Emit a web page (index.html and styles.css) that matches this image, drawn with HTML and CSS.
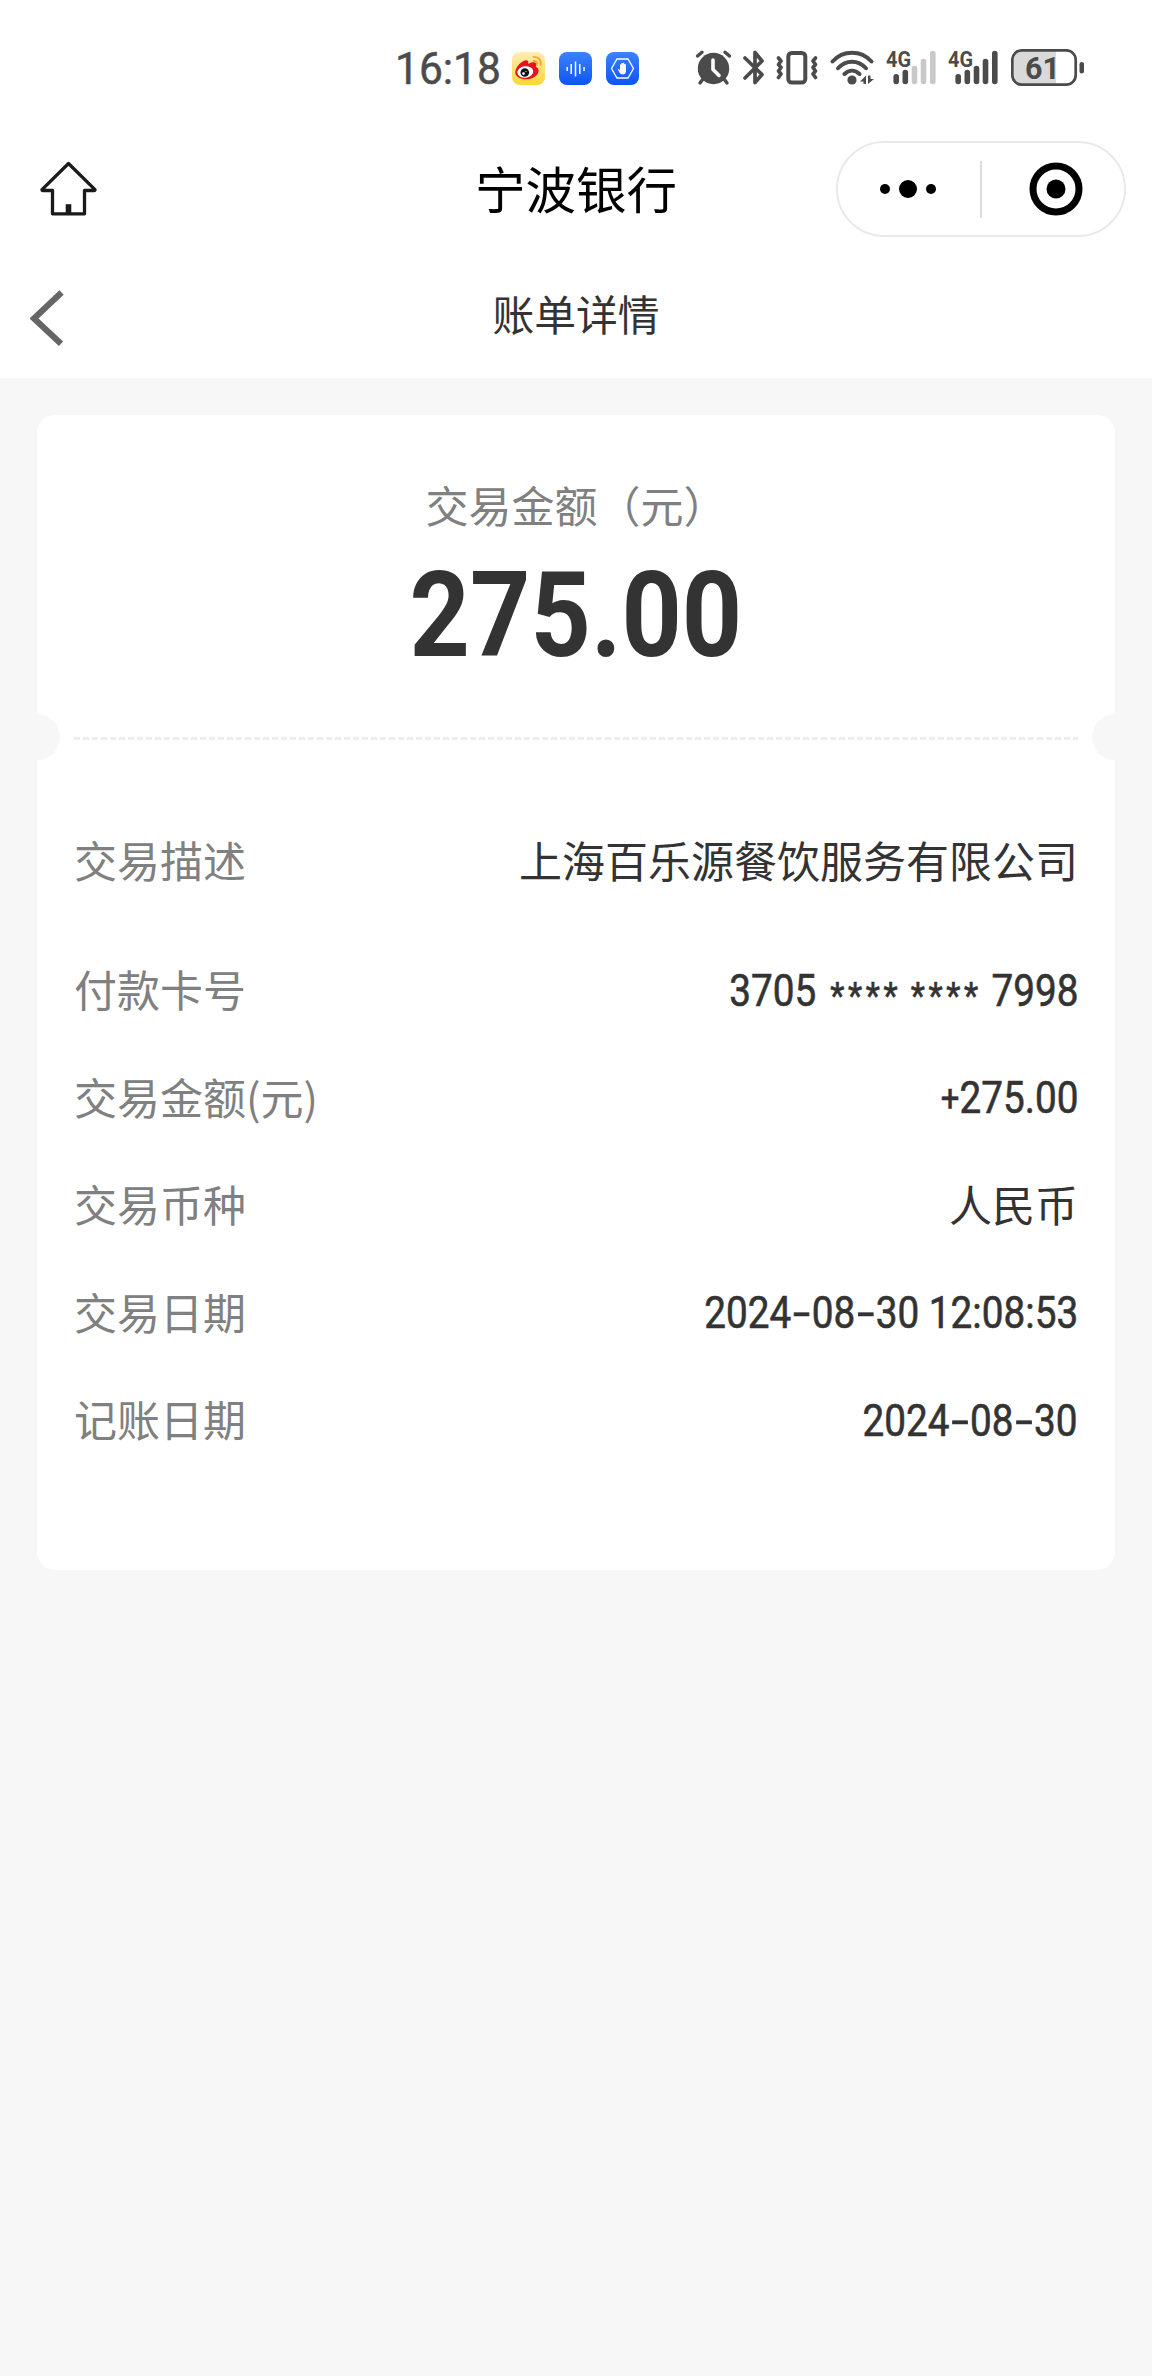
FILE: index.html
```html
<!DOCTYPE html>
<html lang="zh-CN">
<head>
<meta charset="UTF-8">
<title>账单详情</title>
<link rel="stylesheet" href="styles.css">
</head>
<body>
<header class="top">
  <div class="status">
    <span class="clock"><span class="clock-text">16:18</span></span>
    <svg class="app" viewBox="0 0 33 33">
      <defs>
        <linearGradient id="sun" x1="0" y1="0" x2="0" y2="1"><stop offset="0" stop-color="#ffecb9"/><stop offset="1" stop-color="#ffd636"/></linearGradient>
        <linearGradient id="sky" x1="0" y1="0" x2="0" y2="1"><stop offset="0" stop-color="#3d82ff"/><stop offset="1" stop-color="#0d55f5"/></linearGradient>
      </defs>
      <rect width="33" height="33" rx="8" fill="url(#sun)"/>
      <path d="M3.3 20.5C3.3 15 10 8.300 14.200 8.300C16.200 8.300 16.700 10 16.200 12C19 10.300 23 9.500 24 11.500C24.500 12.700 23.900 14 23.900 15C27 16 27.300 19 25.500 22C23 26 17.500 27.500 13 27.200C7 26.800 3.300 24 3.300 20.500Z" fill="#e3141e"/>
      <ellipse cx="13.300" cy="20" rx="8" ry="5.800" fill="#fff" transform="rotate(-8 13.300 20)"/>
      <circle cx="12.800" cy="20.500" r="4.300" fill="#111"/>
      <circle cx="11.500" cy="21.600" r="1.300" fill="#fff"/>
      <circle cx="14" cy="19.600" r=".6" fill="#fff"/>
      <path d="M21.500 4.900C26.500 4.300 29.700 8.500 28.600 13M21.800 9C24.200 8.700 25.600 10.500 24.900 12.700" fill="none" stroke="#f9a62b" stroke-width="1.900" stroke-linecap="round"/>
    </svg>
    <svg class="app" viewBox="0 0 33 33">
      <rect width="33" height="33" rx="8" fill="url(#sky)"/>
      <path d="M8.200 15v4M12.200 12v10M16.500 9.500v15M20.800 12v10M25 15v4" stroke="#fff" stroke-width="1.500"/>
    </svg>
    <svg class="app" viewBox="0 0 33 33">
      <rect width="33" height="33" rx="8" fill="url(#sky)"/>
      <path d="M11 7H22L27.500 16.500L22 26H11L5.500 16.500Z" fill="none" stroke="#fff" stroke-width="1.300"/>
      <path d="M11.500 16.500L14 18V12.500Q14.700 11.800 15.300 12.500V11.300Q16 10.500 16.800 11.300V11Q17.600 10.300 18.300 11.300V12.300Q19.300 11.700 19.900 12.600V20Q19.500 22.500 17 22.500Q14.500 22.500 13.400 20.500Z" fill="#fff"/>
    </svg>
    <svg class="glyph alarm" viewBox="0 0 38 44">
      <circle cx="18.500" cy="22.500" r="15.700" fill="#4b4b4b"/>
      <path d="M2.500 10L7 6.200M34.500 10L30 6.200M8 33L5 37M29 33L32 37" stroke="#4b4b4b" stroke-width="3.400" stroke-linecap="round"/>
      <path d="M18 14v9.500l6 6" fill="none" stroke="#fff" stroke-width="3.600" stroke-linecap="round" stroke-linejoin="round"/>
    </svg>
    <svg class="glyph bluetooth" viewBox="0 0 24 44">
      <path d="M3 12L20 28.500L13 36.500V26M3 32L20 15L13 6.500V20" fill="none" stroke="#4b4b4b" stroke-width="3.700" stroke-linecap="round" stroke-linejoin="round"/>
    </svg>
    <svg class="glyph vibrate" viewBox="0 0 42 44">
      <rect x="12.300" y="7" width="17" height="29.500" rx="3.500" fill="none" stroke="#4b4b4b" stroke-width="4"/>
      <path d="M2.500 12L5 15L2.500 18.500L5 21.500L2.500 25L5 28L2.500 31.500M39.500 12L37 15L39.500 18.500L37 21.500L39.500 25L37 28L39.500 31.500" fill="none" stroke="#4b4b4b" stroke-width="3.600" stroke-linecap="round" stroke-linejoin="round"/>
    </svg>
    <svg class="glyph wifi" viewBox="0 0 44 44">
      <path d="M2.500 15.500C13 3.800 31 3.800 41.500 15.500M8 22.300C16 13.500 28 13.500 36 22.300M14.500 28C19 23.500 25 23.500 29.500 28" fill="none" stroke="#4b4b4b" stroke-width="3.900" stroke-linecap="round"/>
      <circle cx="22" cy="34" r="4.600" fill="#4b4b4b"/>
      <path d="M36 29.500V38H33.500V35.500H30ZM38 38V29.500H40.500V33H44Z" fill="#4b4b4b"/>
    </svg>
    <svg class="glyph signal" viewBox="0 0 51 44">
      <text class="net" x="0" y="21" textLength="25" lengthAdjust="spacingAndGlyphs">4G</text>
      <path d="M10.200 30.800v4.700M19.300 26.500v9" stroke="#4b4b4b" stroke-width="5.600" stroke-linecap="round"/>
      <path d="M28.500 22.500v13M37.500 15.500v20M46.800 7.500v28" stroke="#c8c8c8" stroke-width="5.600" stroke-linecap="round"/>
    </svg>
    <svg class="glyph signal second" viewBox="0 0 51 44">
      <text class="net" x="0" y="21" textLength="25" lengthAdjust="spacingAndGlyphs">4G</text>
      <path d="M10.200 30.800v4.700M19.300 26.500v9M28.500 22.500v13M37.500 15.500v20M46.800 7.500v28" stroke="#4b4b4b" stroke-width="5.600" stroke-linecap="round"/>
    </svg>
    <svg class="glyph battery" viewBox="0 0 74 44">
      <path d="M45 4.500H12Q2 4.500 2 14V30Q2 39 12 39H45Z" fill="#d9d9d9"/>
      <rect x="1.300" y="4.300" width="63.400" height="34.400" rx="9.500" fill="none" stroke="#4b4b4b" stroke-width="2.700"/>
      <rect x="68.500" y="16" width="4.500" height="11.500" rx="2.200" fill="#4b4b4b"/>
      <text class="level" x="14" y="33" textLength="35" lengthAdjust="spacingAndGlyphs">61</text>
    </svg>
  </div>
  <div class="nav">
    <svg class="home" viewBox="0 0 60 60">
      <path d="M31.500 5.500L58 31.700Q58 32.500 57 32.500H47.500V55.800H15.500V32.500H6Q5 32.500 5 31.700Z" fill="none" stroke="#1a1a1c" stroke-width="3.300" stroke-linejoin="round"/>
      <path d="M28.700 46.200h5.600V56h-5.600z" fill="#1a1a1c"/>
    </svg>
    <h1 class="bank">宁波银行</h1>
    <div class="capsule">
      <svg class="more" viewBox="0 0 58 20"><circle cx="6" cy="10" r="5"/><circle cx="29" cy="10" r="9"/><circle cx="52" cy="10" r="5"/></svg>
      <span class="divider"></span>
      <svg class="target" viewBox="0 0 54 54"><circle cx="27" cy="27" r="23" fill="none" stroke="#000" stroke-width="7"/><circle cx="27" cy="27" r="9.500"/></svg>
    </div>
  </div>
  <div class="subnav">
    <svg class="back" viewBox="0 0 40 60"><path d="M31.500 4.500L4 30.500L31 55.800" fill="none" stroke="#666" stroke-width="6.200"/></svg>
    <h2 class="page-title">账单详情</h2>
  </div>
</header>
<main class="card">
  <section class="summary">
    <div class="caption">交易金额（元）</div>
    <div class="amount">275.00</div>
  </section>
  <div class="tear">
    <svg class="dashes" viewBox="0 0 1004 3"><path d="M0 1.500H1004" stroke="#ededed" stroke-width="3" stroke-dasharray="6 3"/></svg>
  </div>
  <dl class="rows">
    <div class="row first"><dt>交易描述</dt><dd>上海百乐源餐饮服务有限公司</dd></div>
    <div class="row"><dt>付款卡号</dt><dd class="num"><span class="lead">3705</span> <span class="stars">****</span> <span class="stars">****</span> 7998</dd></div>
    <div class="row"><dt>交易金额(元)</dt><dd class="num"><span class="plus">+</span>275.00</dd></div>
    <div class="row"><dt>交易币种</dt><dd>人民币</dd></div>
    <div class="row"><dt>交易日期</dt><dd class="num">2024<span class="dash">-</span>08<span class="dash">-</span>30 12:08:53</dd></div>
    <div class="row"><dt>记账日期</dt><dd class="num">2024<span class="dash">-</span>08<span class="dash">-</span>30</dd></div>
  </dl>
</main>
</body>
</html>
```
FILE: styles.css
```css
* { box-sizing: border-box; }
body {
  margin: 0;
  min-height: 2376px;
  background: #f7f7f7;
  color: #333;
  font-family: "Noto Sans CJK SC", sans-serif;
}
svg { display: block; flex: none; }
h1, h2, dl, dt, dd { margin: 0; font-weight: 400; }

.top { height: 378px; background: #fff; }

.status { display: flex; align-items: center; height: 136px; padding-left: 395px; }
.clock { width: 117px; padding-top: 1px; color: #4b4b4b; font: 400 45px/44px Roboto, sans-serif; -webkit-text-stroke: .5px #4b4b4b; }
.clock-text { display: inline-block; transform: scaleX(.945); transform-origin: left; }
.app { width: 33px; height: 33px; margin-right: 14px; }
.glyph { height: 44px; }
.alarm { width: 38px; margin-left: 42px; }
.bluetooth { width: 24px; margin-left: 9px; }
.vibrate { width: 42px; margin-left: 10px; }
.wifi { width: 44px; margin-left: 12px; }
.signal { width: 51px; margin-left: 12px; }
.second { margin-left: 11px; }
.battery { width: 74px; margin-left: 12px; }
.net { font: 700 22.500px Roboto, sans-serif; fill: #4b4b4b; }
.level { font: 700 32px Roboto, sans-serif; fill: #4b4b4b; }

.nav {
  display: grid;
  grid-template-columns: 1fr auto 1fr;
  align-items: center;
  height: 106px;
  padding: 0 26px 0 37px;
}
.home { width: 60px; height: 60px; margin-bottom: 2px; }
.bank { margin: 0 11px 4px 0; color: #000; font-size: 50.500px; line-height: 74px; }
.capsule {
  display: flex;
  align-items: center;
  justify-self: end;
  width: 290px;
  height: 96px;
  padding-left: 41px;
  border: 2px solid #e9e9e9;
  border-radius: 48px;
}
.more { width: 58px; height: 20px; }
.divider { width: 2px; height: 57px; margin: 0 46.500px 0 43px; background: #ddd; }
.target { width: 54px; height: 54px; }

.subnav {
  display: grid;
  grid-template-columns: 1fr auto 1fr;
  align-items: center;
  height: 136px;
  padding: 0 30px;
}
.back { width: 40px; height: 60px; margin-top: 15px; }
.page-title { font-size: 41.800px; line-height: 60px; margin-top: 6px; }

.card {
  width: 1078px;
  height: 1155px;
  margin: 37px auto 0;
  border-radius: 18px;
  background:
    radial-gradient(circle at 0 322px, #f7f7f7 22.500px, transparent 23.500px),
    radial-gradient(circle at 1078px 322px, #f7f7f7 22.500px, transparent 23.500px),
    #fff;
}
.summary {
  display: flex;
  flex-direction: column;
  align-items: center;
  height: 322px;
  padding-top: 58px;
}
.caption { color: #808080; font-size: 43px; line-height: 62px; }
.amount {
  margin-top: 16px;
  font: 700 119px/130px Roboto, sans-serif;
  transform: scaleX(.885);
}
.tear { padding: 0 37px; }
.dashes { width: 1004px; height: 3px; }
.rows { padding: 43px 37px 0; font-size: 43px; line-height: 62px; }
.row { display: flex; align-items: center; justify-content: space-between; height: 107.500px; }
.first { height: 151.500px; }
dt { color: #808080; }
.num {
  padding-top: 7px;
  font-family: Roboto, sans-serif;
  font-size: 43.500px;
  -webkit-text-stroke: .6px #333;
  transform: scaleX(.89);
  transform-origin: right;
}
.dash { display: inline-block; width: 23px; text-align: center; transform: scaleX(1.600); }
.plus { display: inline-block; margin-right: -2px; transform: scale(.85); }
.lead { margin-right: 5px; }
.stars { font-size: 37px; letter-spacing: 4px; vertical-align: -2px; line-height: 1; }
```
